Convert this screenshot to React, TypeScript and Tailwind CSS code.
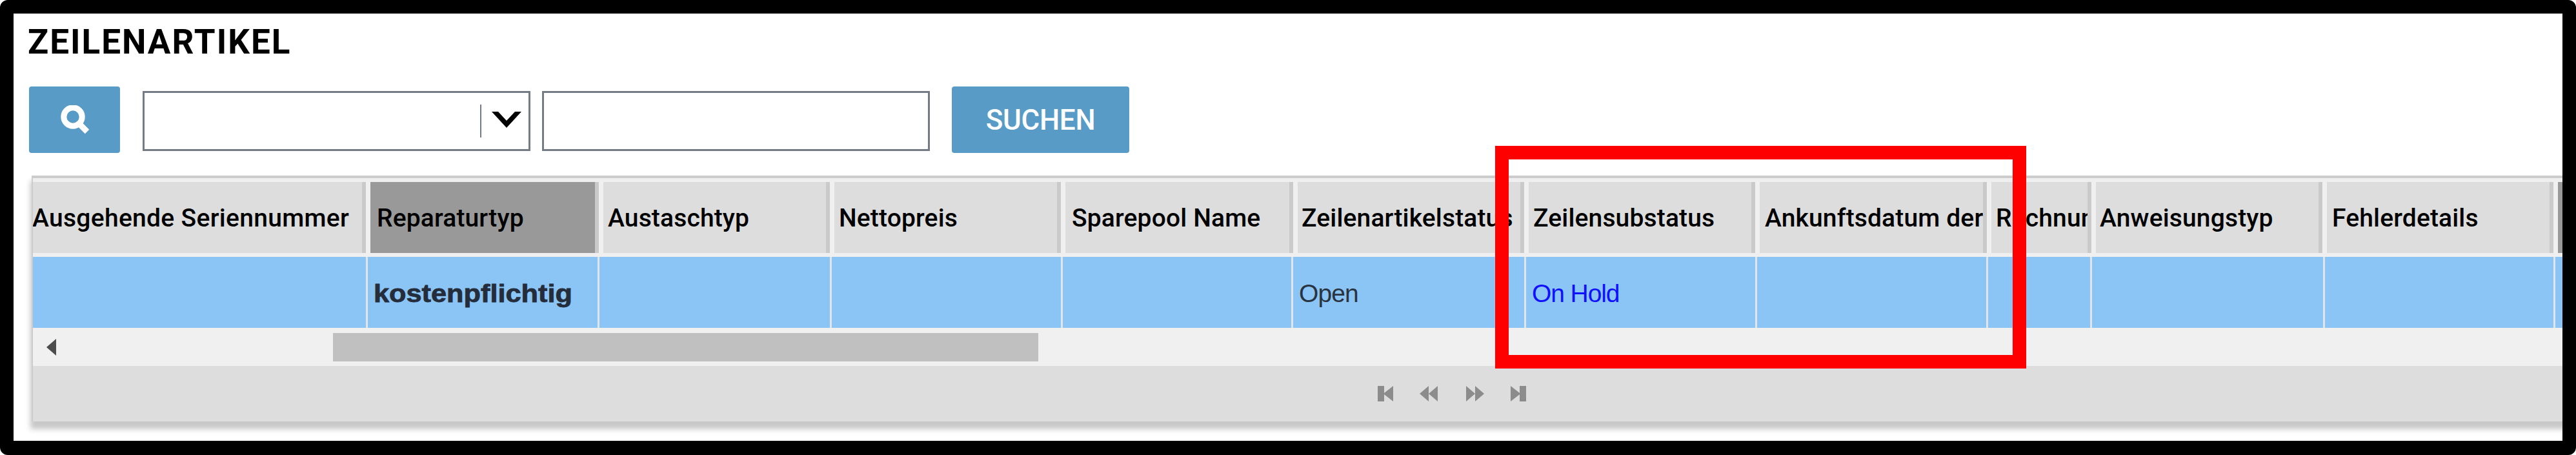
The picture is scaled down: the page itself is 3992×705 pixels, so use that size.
import React, { useState } from "react";

const columns = [
  { label: "Ausgehende Seriennummer", width: "w-[516px]", cell: "w-[516px]", pad: "", value: "" },
  { label: "Reparaturtyp", width: "w-[361px]", cell: "w-[359px]", pad: "pl-[10px]", value: "kostenpflichtig", active: true },
  { label: "Austaschtyp", width: "w-[358px]", cell: "w-[360px]", pad: "pl-[7px]", value: "" },
  { label: "Nettopreis", width: "w-[358px]", cell: "w-[358px]", pad: "pl-[7px]", value: "" },
  { label: "Sparepool Name", width: "w-[360px]", cell: "w-[357px]", pad: "pl-[10px]", value: "" },
  { label: "Zeilenartikelstatus", width: "w-[358px]", cell: "w-[361px]", pad: "pl-[6px]", value: "Open" },
  { label: "Zeilensubstatus", width: "w-[358px]", cell: "w-[358px]", pad: "pl-[7px]", value: "On Hold" },
  { label: "Ankunftsdatum der", width: "w-[359px]", cell: "w-[358px]", pad: "pl-[8px]", value: "" },
  { label: "Rechnung", width: "w-[162px]", cell: "w-[161px]", pad: "pl-[7px]", value: "" },
  { label: "Anweisungstyp", width: "w-[358px]", cell: "w-[361px]", pad: "pl-[6px]", value: "" },
  { label: "Fehlerdetails", width: "w-[358px]", cell: "w-[357px]", pad: "pl-[8px]", value: "" },
  { label: "", width: "w-[361px]", cell: "w-[361px]", pad: "", value: "", active: true },
];

const App = () => {
  const [query, setQuery] = useState("");

  return (
    <div className="relative flex flex-col w-[3992px] h-[705px] border-[21px] border-b-[22px] border-black rounded-[12px] bg-white overflow-hidden font-['Liberation_Sans',sans-serif] text-black">
      <h1 className="ml-[22px] mt-[13px] h-[61px] leading-[62px] text-[53px] font-bold tracking-[2px] font-['Roboto',sans-serif] whitespace-nowrap">
        <span>ZEILENARTIKEL</span>
      </h1>

      <div className="flex items-center ml-[24px] mt-[39px] h-[103px] shrink-0">
        <button className="w-[141px] h-[103px] rounded-[4px] bg-[#579bc6] flex items-center justify-center">
          <svg width="46" height="46" viewBox="0 0 46 46" fill="none" stroke="white">
            <circle cx="20" cy="18" r="14.2" strokeWidth="9" />
            <path d="M29 28L42 41" strokeWidth="9" />
          </svg>
        </button>
        <div className="ml-[35px] mt-[4px] w-[601px] h-[93px] border-[3px] border-[#757b84] flex items-center justify-end">
          <div className="w-[2px] h-[51px] bg-[#757b84]" />
          <svg className="ml-[15px] mr-[10px] -mt-[4px]" width="48" height="27" viewBox="0 0 48 27">
            <path d="M1 1H11L24 15L37 1H47L24 26Z" />
          </svg>
        </div>
        <input
          value={query}
          onChange={(e) => setQuery(e.target.value)}
          className="ml-[18px] mt-[4px] w-[601px] h-[93px] border-[3px] border-[#757b84] outline-none"
        />
        <button className="ml-[34px] w-[275px] h-[103px] rounded-[4px] bg-[#579bc6] text-white text-[44px] font-medium tracking-[-0.3px] font-['Roboto',sans-serif]">
          <span>SUCHEN</span>
        </button>
      </div>

      <div className="ml-[28px] mt-[35px] w-[3930px] h-[381px] shrink-0 border-l-[2px] border-t-[4px] border-[#ccc] bg-[#ddd] shadow-[0_10px_8px_2px_#c8c8c8]">
        <div className="flex pt-[6px] pb-[6px] bg-[#efefef] w-[3930px] overflow-hidden">
          {columns.map((col, i) => (
            <div
              key={i}
              className={`${col.width} ${col.pad} pt-[2px] shrink-0 h-[110px] flex items-center overflow-hidden border-l-[7px] border-r-[6px] border-l-[#f0f0f0] border-r-[#cacaca] first:border-l-0 text-[39px] font-medium tracking-[0.15px] font-['Roboto',sans-serif] whitespace-nowrap ${
                col.active ? "bg-[#999]" : "bg-[#ddd]"
              }`}
            >
              <span className={i === 0 ? "-ml-[1px] tracking-[0.3px]" : ""}>{col.label}</span>
            </div>
          ))}
        </div>

        <div className="flex h-[110px] w-[3930px] overflow-hidden">
          {columns.map((col, i) => (
            <div
              key={i}
              className={`${col.cell} shrink-0 pl-[9px] pt-[4px] flex items-center border-l-[3px] border-[#e2e5e8] first:border-l-0 bg-[#8ac5f5] text-[39px] whitespace-nowrap ${
                col.value === "On Hold"
                  ? "text-[#1010ff] tracking-[-1.1px]"
                  : col.value === "Open"
                    ? "text-[#2a3440] tracking-[-0.9px]"
                    : "text-[#252c3a] font-bold"
              }`}
            >
              <span className={col.value === "kostenpflichtig" ? "inline-block origin-left scale-x-[1.11] [-webkit-text-stroke:0.8px_#252c3a]" : ""}>
                {col.value}
              </span>
            </div>
          ))}
        </div>

        <div className="flex items-center h-[59px] bg-[#f0f0f0]">
          <svg className="ml-[21px]" width="15" height="26" viewBox="0 0 15 26">
            <path d="M15 0V26L0 13Z" fill="#4c4c4c" />
          </svg>
          <div className="ml-[429px] w-[1093px] h-[44px] bg-[#c0c0c0]" />
        </div>

        <div className="flex items-center h-[86px] pl-[2084px] text-[#8c8c8c]">
          <svg width="26" height="24" viewBox="0 0 26 24" fill="currentColor">
            <path d="M0 0H10V11L24 0V24L10 13V24H0Z" />
          </svg>
          <svg className="ml-[39px]" width="28" height="24" viewBox="0 0 28 24" fill="currentColor">
            <path d="M14 0V24L0 12ZM28 0V24L14 12Z" />
          </svg>
          <svg className="ml-[44px]" width="28" height="24" viewBox="0 0 28 24" fill="currentColor">
            <path d="M0 0V24L14 12ZM14 0V24L28 12Z" />
          </svg>
          <svg className="ml-[41px]" width="26" height="24" viewBox="0 0 26 24" fill="currentColor">
            <path d="M24 0H14V11L0 0V24L14 13V24H24Z" />
          </svg>
        </div>
      </div>

      {/* highlight over the substatus and arrival date columns */}
      <div className="absolute left-[2296px] top-[205px] w-[823px] h-[345px] border-[21px] border-[#f00]" />
    </div>
  );
};

export default App;
